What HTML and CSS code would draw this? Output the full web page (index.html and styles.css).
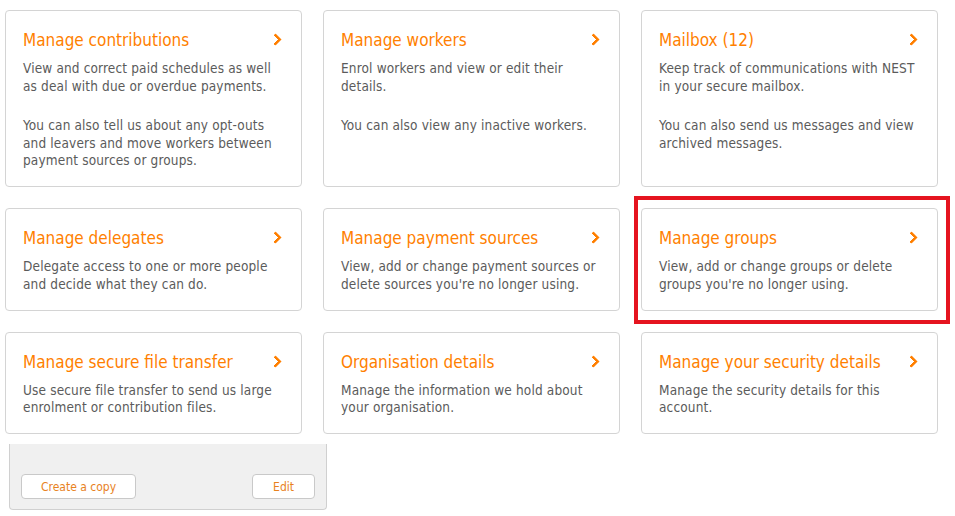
FILE: index.html
```html
<!DOCTYPE html>
<html lang="en">
<head>
    <meta charset="UTF-8">
    <meta name="viewport" content="width=device-width, initial-scale=1.0">
    <title>Employer Dashboard</title>
    <link rel="stylesheet" href="styles.css">
</head>
<body>
    <div class="tiles">
        <!-- Row 1 -->
        <a class="tile" href="#">
            <h3>Manage contributions</h3>
            <p>View and correct paid schedules as well<br>as deal with due or overdue payments.</p>
            <p>You can also tell us about any opt-outs<br>and leavers and move workers between<br>payment sources or groups.</p>
        </a>
        <a class="tile" href="#">
            <h3>Manage workers</h3>
            <p>Enrol workers and view or edit their<br>details.</p>
            <p>You can also view any inactive workers.</p>
        </a>
        <a class="tile" href="#">
            <h3>Mailbox (12)</h3>
            <p>Keep track of communications with NEST<br>in your secure mailbox.</p>
            <p>You can also send us messages and view<br>archived messages.</p>
        </a>

        <!-- Row 2 -->
        <a class="tile" href="#">
            <h3>Manage delegates</h3>
            <p>Delegate access to one or more people<br>and decide what they can do.</p>
        </a>
        <a class="tile" href="#">
            <h3>Manage payment sources</h3>
            <p>View, add or change payment sources or<br>delete sources you're no longer using.</p>
        </a>
        <a class="tile highlighted" href="#">
            <h3>Manage groups</h3>
            <p>View, add or change groups or delete<br>groups you're no longer using.</p>
        </a>

        <!-- Row 3 -->
        <a class="tile" href="#">
            <h3>Manage secure file transfer</h3>
            <p>Use secure file transfer to send us large<br>enrolment or contribution files.</p>
        </a>
        <a class="tile" href="#">
            <h3>Organisation details</h3>
            <p>Manage the information we hold about<br>your organisation.</p>
        </a>
        <a class="tile" href="#">
            <h3>Manage your security details</h3>
            <p>Manage the security details for this<br>account.</p>
        </a>
    </div>

    <div class="actions-panel">
        <button class="btn" type="button">Create a copy</button>
        <button class="btn" type="button">Edit</button>
    </div>
</body>
</html>
```

FILE: styles.css
```css
/* Dashboard tiles */
body {
    font-family: "DejaVu Sans Condensed", "DejaVu Sans", sans-serif;
    margin: 0;
    padding: 10px 17px 0 5px;
    background-color: #fff;
    color: #5b5b5b;
}

.tiles {
    display: grid;
    grid-template-columns: repeat(3, 297px);
    column-gap: 21px;
    row-gap: 21px;
}

.tile {
    position: relative;
    display: block;
    padding: 19px 12px 16.5px 17px;
    border: 1px solid #d4d4d4;
    border-radius: 4px;
    text-decoration: none;
    color: #5b5b5b;
    background-color: #fff;
}

.tile h3 {
    margin: 0 0 10px;
    font-size: 17px;
    line-height: 20px;
    font-weight: normal;
    color: #ff7f00;
}

.tile h3::after {
    content: "";
    position: absolute;
    top: 24px;
    right: 21px;
    width: 6px;
    height: 6px;
    border-top: 3px solid #ff7f00;
    border-right: 3px solid #ff7f00;
    border-radius: 1px;
    transform: rotate(45deg);
}

.tile p {
    margin: 0;
    font-size: 13.5px;
    letter-spacing: 0.15px;
    line-height: 17.5px;
    white-space: nowrap;
}

.tile p + p {
    margin-top: 22px;
}

/* red annotation box */
.highlighted::before {
    content: "";
    position: absolute;
    top: -13px;
    left: -8px;
    right: -13px;
    bottom: -14px;
    border: 4px solid #e5141f;
    pointer-events: none;
}

.actions-panel {
    display: flex;
    justify-content: space-between;
    align-items: flex-end;
    width: 318px;
    height: 66px;
    margin: 10px 0 0 4px;
    padding: 0 11px 10px 11px;
    background-color: #f0f0f0;
    border: 1px solid #d0d0d0;
    border-top: none;
    border-radius: 0 0 4px 4px;
    box-sizing: border-box;
}

.btn {
    font-family: inherit;
    font-size: 12px;
    color: #e8821e;
    background-color: #fff;
    border: 1px solid #c9c9c9;
    border-radius: 4px;
    height: 25px;
    padding: 0 19px;
    cursor: pointer;
}

.btn:last-child {
    padding: 0 20px;
}
```
